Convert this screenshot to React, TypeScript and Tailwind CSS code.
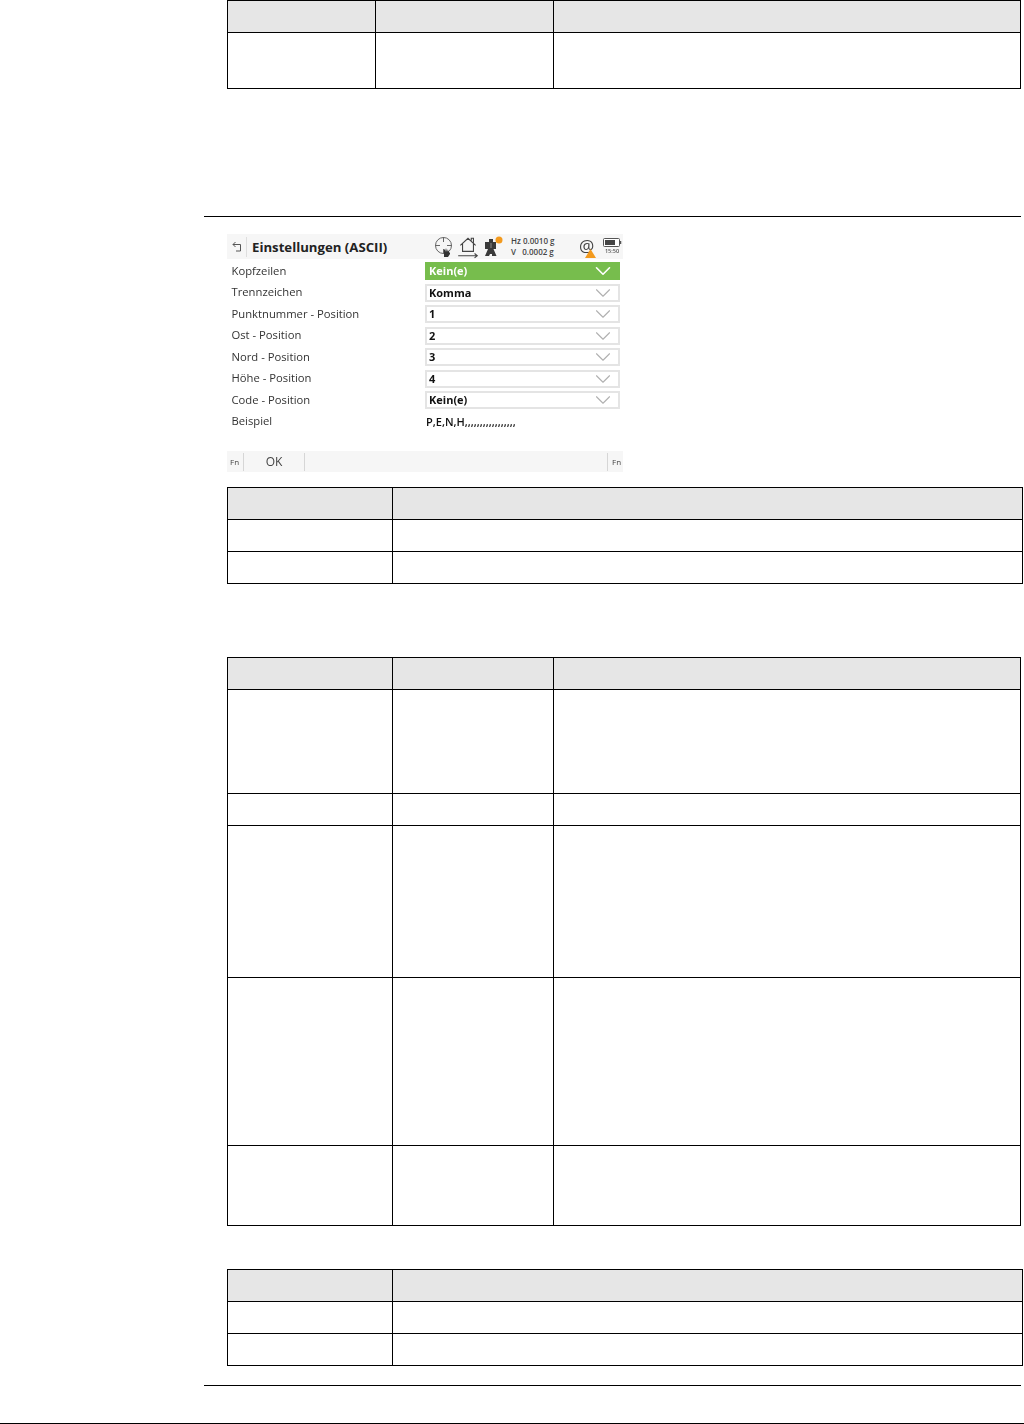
import { ChevronDown } from "lucide-react";

const fields = [
  { label: "Kopfzeilen", value: "Kein(e)", active: true },
  { label: "Trennzeichen", value: "Komma" },
  { label: "Punktnummer - Position", value: "1" },
  { label: "Ost - Position", value: "2" },
  { label: "Nord - Position", value: "3" },
  { label: "Höhe - Position", value: "4" },
  { label: "Code - Position", value: "Kein(e)" },
];

const cell = "border border-black p-0";

function Row({ cols, height, head }: { cols: number; height: string; head?: boolean }) {
  return (
    <tr className={`${height} ${head ? "bg-[#e6e6e6]" : ""}`}>
      {Array.from({ length: cols }).map((_, i) => (
        <td key={i} className={cell} />
      ))}
    </tr>
  );
}

function StatusIcons() {
  return (
    <div className="flex items-center ml-[50px] h-full">
      {/* aiming target with hand */}
      <svg width="20" height="21" viewBox="0 0 20 21">
        <circle cx="9.500" cy="9.500" r="8" fill="none" stroke="#666" strokeWidth="1" />
        <path d="M9.500 1v5M9.500 13v5M1 9.500h5M13 9.500h5" stroke="#666" strokeWidth="1" />
        <path d="M10 19v-5l1-1v3l1-4v4l1-4v4l1-3v3l1-2v3l1-1v2l-2 3h-4z" fill="#333" />
      </svg>
      {/* home position */}
      <svg width="22" height="24" viewBox="0 0 20 22" className="ml-[3px]">
        <path d="M3 9.500 10 3l7 6.500M5 8v7h10V8M13 5V3h2v4" fill="none" stroke="#444" strokeWidth="1" />
        <path d="M1 19h17M16 17l2.500 2-2.500 2" fill="none" stroke="#444" strokeWidth="1" />
      </svg>
      {/* instrument */}
      <svg width="20" height="22" viewBox="0 0 20 22" className="ml-[5px]">
        <path d="M5 3h4v3h3v7H9.500l3 7H8v-2H6l-1 2H1l3-7H1V6h4z" fill="#3a3a3a" />
        <path d="M7 7v5" stroke="#8a8a8a" strokeWidth="1" />
        <circle cx="15" cy="4" r="3.500" fill="#f39a1e" />
      </svg>
      <div className="ml-[7px] w-[48px] text-[8px] leading-[10.500px] font-semibold text-[#444] font-['Open_Sans',sans-serif] whitespace-pre">
        <div>Hz 0.0010 g</div>
        <div>V&nbsp;&nbsp; 0.0002 g</div>
      </div>
      {/* connection warning */}
      <div className="relative ml-[20px] w-[17px] h-[20px]">
        <span className="absolute left-0 top-[0px] text-[17px] leading-[18px] text-[#444] font-['Open_Sans',sans-serif]">@</span>
        <svg width="11" height="9" viewBox="0 0 11 9" className="absolute left-[6px] top-[12px]">
          <path d="M5.500 0 11 9H0z" fill="#f39a1e" />
        </svg>
      </div>
      {/* battery */}
      <div className="ml-[7px] w-[18px] flex flex-col items-center">
        <svg width="19" height="10" viewBox="0 0 19 10">
          <rect x="0.500" y="0.500" width="16" height="8" rx="1" fill="#fff" stroke="#555" />
          <rect x="2" y="2" width="10" height="5" fill="#444" />
          <path d="M17.500 3v3" stroke="#555" strokeWidth="1.500" />
        </svg>
        <span className="text-[5.500px] leading-[7px] font-semibold text-[#555] font-['Open_Sans',sans-serif]">15:50</span>
      </div>
    </div>
  );
}

function DeviceScreen() {
  return (
    <div className="ml-[227px] mt-[17px] w-[396px] h-[238px] flex flex-col font-['Open_Sans',sans-serif] text-[#333] blur-[0.3px]">
      {/* title bar */}
      <div className="h-[25px] bg-[#f6f6f6] flex items-center">
        <svg width="12" height="12" viewBox="0 0 12 12" className="ml-[4px]">
          <path d="M2 3.500h7.500V10H5M4.500 1 2 3.500 4.500 6" fill="none" stroke="#555" strokeWidth="1" />
        </svg>
        <div className="ml-[3px] w-px h-[20px] bg-[#dedede]" />
        <span className="ml-[5px] pt-[2px] w-[132px] whitespace-nowrap text-[13.200px] font-bold text-[#222]">Einstellungen (ASCII)</span>
        <StatusIcons />
      </div>

      {/* field list */}
      <div className="mt-[3.400px] flex flex-col gap-[3.500px]">
        {fields.map((f) => (
          <div key={f.label} className="flex h-[18px] items-center">
            <span className="ml-[4.500px] w-[193.500px] text-[11.250px]">{f.label}</span>
            <div
              className={`w-[195px] h-full flex items-center justify-between text-[11px] font-bold ${
                f.active ? "bg-[#77bd4d] text-white pl-[4px] pr-[4px]" : "border-2 border-[#e4e4e4] pl-[2px] pr-[2px] text-[#111]"
              }`}
            >
              <span>{f.value}</span>
              <ChevronDown
                size={26}
                strokeWidth={f.active ? 1.500 : 1}
                className={`shrink-0 ${f.active ? "text-white" : "text-[#b0b0b0]"}`}
              />
            </div>
          </div>
        ))}
        <div className="flex h-[18px] items-center">
          <span className="ml-[4.500px] w-[194.500px] text-[11.250px]">Beispiel</span>
          <span className="text-[11px] font-semibold text-[#111] whitespace-nowrap">P,E,N,H,,,,,,,,,,,,,,,,,</span>
        </div>
      </div>

      {/* softkeys */}
      <div className="mt-auto h-[21px] bg-[#f6f6f6] flex items-center text-[#444]">
        <span className="w-[16px] pl-[3px] text-[8px]">Fn</span>
        <div className="w-px h-[18px] bg-[#d6d6d6]" />
        <span className="w-[60px] text-center text-[12px]">OK</span>
        <div className="w-px h-[18px] bg-[#d6d6d6]" />
        <div className="flex-1" />
        <div className="w-px h-[18px] bg-[#d6d6d6]" />
        <span className="w-[15px] pl-[4px] text-[8px]">Fn</span>
      </div>
    </div>
  );
}

export default function App() {
  return (
    <div className="relative w-[1024px] h-[1424px] bg-white overflow-hidden">
      {/* top table, cut off by the page */}
      <table className="ml-[227px] w-[794px] table-fixed border-collapse">
        <colgroup>
          <col className="w-[148px]" />
          <col className="w-[178px]" />
          <col />
        </colgroup>
        <tbody>
          <Row cols={3} height="h-[32px]" head />
          <Row cols={3} height="h-[56px]" />
        </tbody>
      </table>

      <div className="ml-[204px] mt-[127px] w-[817px] h-px bg-black" />

      <DeviceScreen />

      <table className="ml-[227px] mt-[15px] w-[796px] table-fixed border-collapse">
        <colgroup>
          <col className="w-[165px]" />
          <col />
        </colgroup>
        <tbody>
          <Row cols={2} height="h-[32px]" head />
          <Row cols={2} height="h-[32px]" />
          <Row cols={2} height="h-[32px]" />
        </tbody>
      </table>

      <table className="ml-[227px] mt-[73px] w-[794px] table-fixed border-collapse">
        <colgroup>
          <col className="w-[165px]" />
          <col className="w-[161px]" />
          <col />
        </colgroup>
        <tbody>
          <Row cols={3} height="h-[32px]" head />
          <Row cols={3} height="h-[104px]" />
          <Row cols={3} height="h-[32px]" />
          <Row cols={3} height="h-[152px]" />
          <Row cols={3} height="h-[168px]" />
          <Row cols={3} height="h-[80px]" />
        </tbody>
      </table>

      <table className="ml-[227px] mt-[43px] w-[796px] table-fixed border-collapse">
        <colgroup>
          <col className="w-[165px]" />
          <col />
        </colgroup>
        <tbody>
          <Row cols={2} height="h-[32px]" head />
          <Row cols={2} height="h-[32px]" />
          <Row cols={2} height="h-[32px]" />
        </tbody>
      </table>

      <div className="ml-[204px] mt-[19px] w-[817px] h-px bg-black" />
      <div className="mt-[37px] w-full h-px bg-black" />
    </div>
  );
}
